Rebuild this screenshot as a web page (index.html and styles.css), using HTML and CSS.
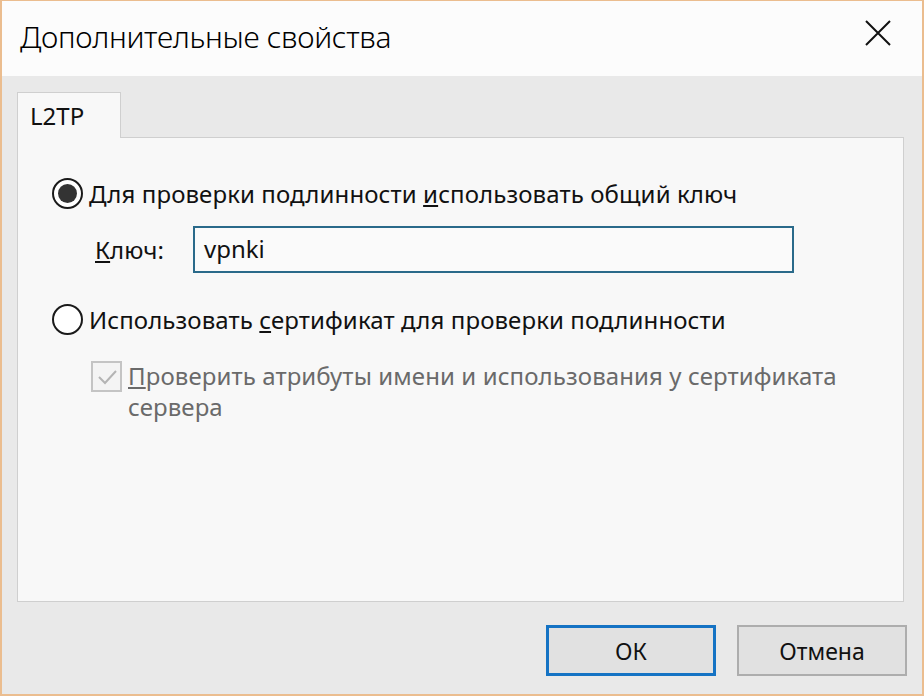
FILE: index.html
```html
<!DOCTYPE html>
<html lang="ru">
<head>
<meta charset="utf-8">
<title>Дополнительные свойства</title>
<link rel="stylesheet" href="styles.css">
</head>
<body>
<div class="window">
  <div class="titlebar">
    <span class="title">Дополнительные свойства</span>
    <svg class="close" width="28" height="28" viewBox="0 0 28 28"><path d="M2 2 L26 26 M26 2 L2 26" stroke="#111" stroke-width="2" fill="none"/></svg>
  </div>
  <div class="content">
    <div class="tabs"><div class="tab">L2TP</div></div>
    <div class="panel">
      <div class="row radio-row">
        <span class="radio checked"><span class="dot"></span></span>
        <span class="label">Для проверки подлинности <u>и</u>спользовать общий ключ</span>
      </div>
      <div class="row key-row">
        <span class="key-label"><u>К</u>люч:</span>
        <div class="field">vpnki</div>
      </div>
      <div class="row radio-row second">
        <span class="radio"></span>
        <span class="label">Использовать <u>с</u>ертификат для проверки подлинности</span>
      </div>
      <div class="row check-row">
        <span class="checkbox"><svg width="26" height="26" viewBox="0 0 26 26"><path d="M5 13 L11 19 L22 7" stroke="#b4b4b4" stroke-width="2" fill="none"/></svg></span>
        <span class="check-label"><u>П</u>роверить атрибуты имени и использования у сертификата<br>сервера</span>
      </div>
    </div>
    <div class="buttons">
      <button class="btn default">ОК</button>
      <button class="btn">Отмена</button>
    </div>
  </div>
</div>
</body>
</html>
```
FILE: styles.css
```css
html, body {
  margin: 0;
  padding: 0;
  background: #ffffff;
}
.window {
  width: 924px;
  height: 696px;
  box-sizing: border-box;
  border: 2px solid #ebbd8f;
  border-top-width: 1px;
  display: flex;
  flex-direction: column;
  font-family: "Noto Sans", "Open Sans", sans-serif;
  color: #111;
}
.titlebar {
  height: 75px;
  flex: none;
  background: #fcfcfc;
  display: flex;
  align-items: center;
  justify-content: space-between;
  padding: 0 30px 0 18px;
}
.title {
  font-size: 30px;
  font-weight: 300;
  color: #000;
  letter-spacing: -0.3px;
  margin-top: -4px;
}
.close {
  margin-top: -12px;
}
.content {
  flex: 1;
  background: #e9e9e9;
  display: flex;
  flex-direction: column;
  padding: 16px 15px 0 15px;
}
.tabs {
  display: flex;
  height: 45px;
  flex: none;
}
.tab {
  width: 104px;
  box-sizing: border-box;
  background: #f8f8f8;
  border: 1px solid #cfcfcf;
  border-bottom: none;
  font-size: 24px;
  padding: 6px 0 0 12px;
  position: relative;
  z-index: 1;
  height: 46px;
}
.panel {
  height: 465px;
  flex: none;
  box-sizing: border-box;
  background: #f8f8f8;
  border: 1px solid #cfcfcf;
  margin-right: 3px;
  padding: 39px 0 0 34px;
  display: flex;
  flex-direction: column;
}
.row {
  display: flex;
  align-items: center;
}
.label, .key-label, .check-label {
  font-size: 24px;
  letter-spacing: 0.1px;
}
.radio {
  width: 31px;
  height: 31px;
  box-sizing: border-box;
  border: 2px solid #1a1a1a;
  border-radius: 50%;
  background: #fff;
  display: flex;
  align-items: center;
  justify-content: center;
  margin-right: 6px;
  flex: none;
}
.dot {
  width: 19px;
  height: 19px;
  border-radius: 50%;
  background: #333;
}
.key-row {
  margin-top: 16px;
  padding-left: 43px;
}
.key-label {
  width: 98px;
}
.field {
  width: 601px;
  height: 47px;
  box-sizing: border-box;
  border: 2px solid #2a6a8a;
  background: #fafafa;
  font-size: 24px;
  padding: 4px 0 0 9px;
}
.second {
  margin-top: 30px;
}
.check-row {
  align-items: flex-start;
  margin-top: 24px;
  padding-left: 39px;
}
.checkbox {
  width: 31px;
  height: 31px;
  box-sizing: border-box;
  border: 2px solid #c4c4c4;
  background: #f4f4f4;
  display: flex;
  align-items: center;
  justify-content: center;
  margin-right: 6px;
  margin-top: 1px;
  flex: none;
}
.check-label {
  color: #6a6a6a;
  line-height: 31px;
}
.buttons {
  display: flex;
  justify-content: flex-end;
  gap: 21px;
  margin-top: 23px;
}
.btn {
  width: 170px;
  height: 51px;
  box-sizing: border-box;
  background: #e1e1e1;
  border: 2px solid #adadad;
  font-family: "Noto Sans", "Open Sans", sans-serif;
  font-size: 23px;
  color: #111;
  padding: 0;
}
.btn.default {
  border: 3px solid #1573c4;
}
```
